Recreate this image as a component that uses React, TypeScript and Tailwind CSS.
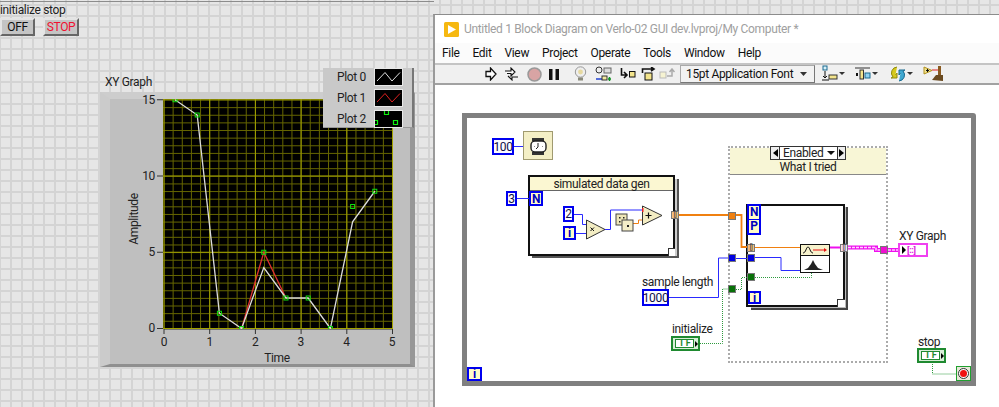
const menuItems = ["File", "Edit", "View", "Project", "Operate", "Tools", "Window", "Help"];

const xTicks = [0, 1, 2, 3, 4, 5];
const yTicks = [0, 5, 10, 15];
const xs = (i: number) => 175 + 22.2 * i;
const sy = (v: number) => 328.5 - 15.25 * v;

const whitePlot = [15, 14, 1, 0, 4, 2, 2, 0, 7, 9];
const markers = [15, 14, 1, 0, 5, 2, 2, 0, 8, 9];

const legend = [
  { name: "Plot 0", color: "#e0e0e0" },
  { name: "Plot 1", color: "#e02020" },
  { name: "Plot 2", color: "" },
];

function PlotArea() {
  const minorX = Array.from({ length: 26 }, (_, i) => 164 + i * 9.14);
  const minorY = Array.from({ length: 31 }, (_, i) => 100 + i * 7.63);
  return (
    <svg width="230" height="230" viewBox="163 99 230 230" className="block bg-black">
      {minorX.map((x) => (
        <line key={x} x1={x} x2={x} y1="99" y2="329" stroke="#666600" strokeWidth="1" />
      ))}
      {minorY.map((y) => (
        <line key={y} x1="163" x2="393" y1={y} y2={y} stroke="#666600" strokeWidth="1" />
      ))}
      {xTicks.map((t) => (
        <line key={t} x1={164 + t * 45.7} x2={164 + t * 45.7} y1="99" y2="329" stroke="#a3a300" strokeWidth="1" />
      ))}
      {yTicks.map((t) => (
        <line key={t} x1="163" x2="393" y1={sy(t)} y2={sy(t)} stroke="#a3a300" strokeWidth="1" />
      ))}
      <polyline points={`${xs(3)},${sy(0)} ${xs(4)},${sy(5)} ${xs(5)},${sy(2)}`} fill="none" stroke="#e03030" strokeWidth="1.3" />
      <polyline points={whitePlot.map((v, i) => `${xs(i)},${sy(v)}`).join(" ")} fill="none" stroke="#dcdcdc" strokeWidth="1.3" />
      {markers.map((v, i) => (
        <rect key={i} x={xs(i) - 2} y={sy(v) - 2} width="4" height="4" fill="none" stroke="#10e010" strokeWidth="1" />
      ))}
    </svg>
  );
}

function XYGraph() {
  return (
    <div className="absolute left-[100px] top-[75px] flex flex-col">
      <div className="h-[17px] pl-[5px] leading-[14px] text-[#222]">XY Graph</div>
      <div className="flex h-[275px] w-[315px] border-t-[7px] border-r-[5px] border-b-[3px] border-l-[10px] border-t-[#cdcdcd] border-r-[#979797] border-b-[#8f8f8f] border-l-[#cbcbcb] bg-[#bfbfbf]">
        <div className="flex h-[240px] w-[36px] items-center justify-center pl-[12px]">
          <span className="-rotate-90 leading-none whitespace-nowrap text-[#222]">Amplitude</span>
        </div>
        <div className="-mt-[7px] -ml-[10px] flex h-[244px] w-[27px] flex-col justify-between pr-[8px] text-right leading-[16px] text-[#222]">
          <span>15</span>
          <span>10</span>
          <span>5</span>
          <span>0</span>
        </div>
        <div className="flex">
          <svg width="10" height="232" viewBox="0 99 10 232" className="-ml-[6px]">
            {yTicks.map((t) => (
              <line key={t} x1="0" x2="6" y1={sy(t)} y2={sy(t)} stroke="#333" />
            ))}
          </svg>
          <div className="-ml-[4px]">
            <PlotArea />
          </div>
        </div>
      </div>
    </div>
  );
}

function FrontPanel() {
  return (
    <>
      <div className="absolute left-0 top-[1px] h-px w-[434px] bg-[#8c8c8c]" />
      <div className="absolute left-0 top-[3px] flex flex-col gap-[1px]">
        <div className="leading-[14px] text-[#222]">initialize stop</div>
        <div className="flex gap-[8px]">
          <div className="flex h-[18px] w-[35px] items-center justify-center border-2 border-t-[#e4e4e4] border-r-[#666] border-b-[#666] border-l-[#e4e4e4] bg-[#c4c4c4] text-[#111]">
            OFF
          </div>
          <div className="flex h-[18px] w-[36px] items-center justify-center border-2 border-t-[#e4e4e4] border-r-[#666] border-b-[#666] border-l-[#e4e4e4] bg-[#c4c4c4] text-[#f01030]">
            STOP
          </div>
        </div>
      </div>

      <XYGraph />

      {/* x scale sits over the bottom of the graph frame */}
      <div className="absolute left-[160px] top-[329px] flex w-[240px] flex-col">
        <svg width="240" height="6" viewBox="0 0 240 6">
          <line x1="4" x2="233" y1="0.5" y2="0.5" stroke="#777" />
          {xTicks.map((t) => (
            <line key={t} x1={4 + t * 45.7} x2={4 + t * 45.7} y1="0" y2="5" stroke="#333" />
          ))}
        </svg>
        <div className="flex w-[236px] justify-between leading-[14px] text-[#222]">
          {xTicks.map((t) => (
            <span key={t} className="w-[8px] text-center">{t}</span>
          ))}
        </div>
        <div className="w-[234px] pt-[2px] text-center leading-[14px] text-[#222]">Time</div>
      </div>

      {/* legend */}
      <div className="absolute left-[323px] top-[68px] flex h-[60px] w-[91px] flex-col gap-[5px] border-r-[2px] border-b-[1px] border-r-[#777] border-b-[#999] bg-[#c9c9c9] pt-[1px] pl-[14px]">
        {legend.map((l) => (
          <div key={l.name} className="flex h-[16px] items-center gap-[10px] text-[#222]">
            <span className="w-[28px] whitespace-nowrap">{l.name}</span>
            <svg width="27" height="16" viewBox="0 0 27 16" className="bg-black outline outline-1 outline-[#e8e8e8]">
              {l.color ? (
                <polyline points="2,12 10,3.5 17,12 25,3.5" fill="none" stroke={l.color} />
              ) : (
                <path d="M9.500 0v3.500h4V0M0 9.500h2.500v4H0M18.500 9.500h4v4h-4z" fill="none" stroke="#10f010" strokeWidth="1.200" />
              )}
            </svg>
          </div>
        ))}
      </div>
    </>
  );
}

function Toolbar() {
  return (
    <div className="flex h-[22px] items-center border-t-2 border-b-2 border-t-[#c4c4c4] border-b-[#a2a2a2] bg-[#f0f0f0] pl-[50px]">
      {/* run */}
      <svg width="12" height="14" viewBox="0 0 12 14">
        <path d="M1 4.500h4.500V1L11 7l-5.500 6V9.500H1z" fill="#fff" stroke="#111" strokeWidth="1.300" />
      </svg>
      {/* run continuously */}
      <svg width="15" height="14" viewBox="0 0 15 14" className="ml-[7px]">
        <path d="M1 4h6V1l4 4-4 4V6.500H3M14 10H8v3L4 9" fill="#fff" stroke="#111" strokeWidth="1.100" />
      </svg>
      {/* abort */}
      <svg width="15" height="15" viewBox="0 0 15 15" className="ml-[8px]">
        <circle cx="7.500" cy="7.500" r="6.500" fill="#d8a4a4" stroke="#999" strokeWidth="1.500" />
      </svg>
      {/* pause */}
      <svg width="10" height="11" viewBox="0 0 10 11" className="ml-[7px]">
        <path d="M0 0h3.500v11H0zM6.500 0H10v11H6.500z" fill="#111" />
      </svg>
      {/* highlight */}
      <svg width="13" height="16" viewBox="0 0 13 16" className="ml-[15px]">
        <circle cx="6.500" cy="6" r="5.200" fill="#eee" stroke="#999" />
        <circle cx="6.500" cy="6" r="2.400" fill="#e6d9a0" />
        <path d="M4 11.500h5v3H4z" fill="#8a8a7a" />
      </svg>
      {/* retain wire values */}
      <svg width="17" height="16" viewBox="0 0 17 16" className="ml-[8px]">
        <circle cx="4" cy="4" r="3" fill="#eee" stroke="#333" />
        <rect x="9" y="2" width="7" height="5" fill="#ddd" stroke="#666" />
        <path d="M1 13h6" stroke="#2040d0" strokeWidth="1.500" />
        <rect x="7" y="10" width="5" height="4" fill="#f3e9a0" stroke="#333" />
        <path d="M13 13h3M14.500 11v4" stroke="#109020" strokeWidth="1.500" />
      </svg>
      {/* step into */}
      <svg width="16" height="12" viewBox="0 0 16 12" className="ml-[8px]">
        <path d="M1.500 0v7h5M4 4l3 3-3 3" fill="none" stroke="#111" strokeWidth="1.600" />
        <rect x="9.500" y="3.500" width="5.500" height="5.500" fill="#f3e48c" stroke="#111" />
      </svg>
      {/* step over */}
      <svg width="16" height="14" viewBox="0 0 16 14" className="ml-[5px]">
        <path d="M1.500 6V2h11M10 0l3 2-3 2" fill="none" stroke="#111" strokeWidth="1.600" />
        <rect x="4" y="6" width="7" height="7" fill="#f3e48c" stroke="#111" />
      </svg>
      {/* step out */}
      <svg width="16" height="12" viewBox="0 0 16 12" className="ml-[2px]">
        <rect x="1" y="4" width="6" height="6" fill="#f6f3d2" stroke="#bbb" />
        <path d="M8 8h5V2M10.500 4L13 1l2.500 3" fill="none" stroke="#aaa" strokeWidth="1.500" />
      </svg>
      <div className="ml-[5px] flex h-[18px] w-[135px] items-center justify-between border border-[#a9a9a9] border-r-[#777] border-b-[#777] bg-[#f2f2f2] pr-[7px] pl-[5px] whitespace-nowrap text-[#111]">
        <span>15pt Application Font</span>
        <svg width="7" height="4" viewBox="0 0 7 4">
          <path d="M0 0h7L3.500 4z" fill="#333" />
        </svg>
      </div>
      {/* align */}
      <svg width="23" height="18" viewBox="0 0 23 18" className="ml-[7px]">
        <rect x="1" y="1" width="4" height="4" fill="#d8f0f8" stroke="#1a6a90" />
        <path d="M3 6v7M1 11l2 2 2-2M0 15h7" stroke="#111" fill="none" />
        <rect x="7" y="10" width="8" height="4" fill="#f3e48c" stroke="#333" />
        <path d="M17 7h6l-3 3z" fill="#333" />
      </svg>
      {/* distribute */}
      <svg width="23" height="18" viewBox="0 0 23 18" className="ml-[10px]">
        <path d="M0 3h15" stroke="#333" />
        <rect x="1" y="8" width="2" height="3" fill="#111" />
        <rect x="5" y="5" width="3.500" height="9" fill="#f3e48c" stroke="#333" />
        <rect x="10" y="8" width="5" height="5" fill="#8fd0f0" stroke="#1a6a90" />
        <path d="M17 7h6l-3 3z" fill="#333" />
      </svg>
      {/* reorder */}
      <svg width="23" height="18" viewBox="0 0 23 18" className="ml-[12px]">
        <path d="M7 2A6 6 0 0 0 3 12l-2 1h6V8l-1.500 2" fill="#d6c91c" stroke="#8f8a10" />
        <path d="M9 16a6 6 0 0 0 4-10l2-1H9v5l1.500-2" fill="#40a8d0" stroke="#1a6a90" />
        <path d="M17 7h6l-3 3z" fill="#333" />
      </svg>
      {/* clean up */}
      <svg width="21" height="18" viewBox="0 0 21 18" className="ml-[10px]">
        <path d="M1 2l8 3.500-8 3.500z" fill="#f3e48c" stroke="#b09020" />
        <path d="M3 5.500h3M4.500 4v3" stroke="#111" />
        <path d="M9 5h7" stroke="#e02020" />
        <path d="M15 1h3v9h-3z" fill="#8a5a20" />
        <path d="M9 15l4-5h7v6z" fill="#6a4a20" />
      </svg>
    </div>
  );
}

function Wires() {
  return (
    <svg width="564" height="320" viewBox="435 87 564 320" className="absolute left-0 top-0">
      <g fill="none" stroke="#2a2aff" strokeWidth="1">
        <path d="M514 148.500h10M517 200.500h13M574 216.500h8.500v10h4M576 235.500h10M605 231.500h5.500v-19.500h31.500" />
        <path d="M669 299.500h49.500v-39.500h10M736 260.500h11M755 259.500h26v13h19" />
      </g>
      <path d="M633 225.500h5.500v-3.500h4" fill="none" stroke="#f08010" />
      <path d="M679 217h49M736 217h5.500v32h5.500" fill="none" stroke="#f08010" strokeWidth="1.800" />
      <path d="M754 249.500h46" fill="none" stroke="#f08010" />
      <g fill="none" stroke="#2d9a3e" strokeDasharray="1 1">
        <path d="M700 345.500h22.500v-54.500h5.500M736 291.500h5.500v-12h5.500M755 279.500h56.500v-5" />
        <path d="M932.500 364v12h23.500" />
      </g>
      <path d="M829 249.500h11" stroke="#ee10ee" strokeWidth="2" />
      <path d="M848 249.500h28v2.500h4M888 252h10" fill="none" stroke="#ee10ee" strokeWidth="4" />
      <path d="M848 249.500h28v2.500h4M888 252h10" fill="none" stroke="#ffd0ff" strokeWidth="1.500" strokeDasharray="3 1" />

      {/* wait node */}
      <rect x="523.500" y="133.500" width="29" height="28" fill="#f4efc6" stroke="#a09a70" />
      <rect x="532" y="140" width="12" height="3" fill="#333" />
      <rect x="532" y="154" width="12" height="3" fill="#333" />
      <rect x="531" y="143" width="15" height="11" rx="4" fill="#fff" stroke="#222" strokeWidth="1.400" />
      <path d="M538 145v4l-2 2M534 148.500h.5M543 148.500h-.5" fill="none" stroke="#222" />

      {/* multiply, add */}
      <polygon points="586.500,222 586.500,241 605,231.500" fill="#f3edc3" stroke="#333" />
      <path d="M590.500 229.500l3.500 3.500M594 229.500l-3.500 3.500" stroke="#111" />
      <polygon points="642.500,208 642.500,227 662,217.500" fill="#f3edc3" stroke="#333" />
      <path d="M645.500 217.500h6M648.500 214.500v6" stroke="#111" strokeWidth="1.200" />
      <rect x="642" y="210" width="1.500" height="4" fill="#f02020" />

      {/* dice */}
      <rect x="616" y="216" width="11" height="11" fill="#eee6b8" stroke="#444" />
      <rect x="622" y="222" width="11" height="11" fill="#f4edc8" stroke="#444" />
      <path d="M619 219h1.500v1.500H619zM623 219h1.500v1.500H623zM619 223h1.500v1.500H619z" fill="#222" />
      <rect x="627" y="227" width="2" height="2" fill="#222" />

      {/* gaussian node */}
      <rect x="800.500" y="246.500" width="29" height="28" fill="#fff" stroke="#111" />
      <rect x="801" y="247" width="28" height="10" fill="#f7f2cc" />
      <path d="M800.500 257.500h29" stroke="#111" />
      <path d="M803 255c3 0 3-6 5-6s2 6 5 6" fill="none" stroke="#111" />
      <path d="M813 252h12" stroke="#e81010" />
      <path d="M824 250l3 2-3 2z" fill="#e81010" />
      <path d="M804 272l4-2 3-4 2-4 2 4 3 4 5 2z" fill="#222" />
    </svg>
  );
}

function BoolTerminal() {
  return (
    <div className="flex h-[15px] w-[29px] items-center border-2 border-[#1f8a30] bg-[#d8eed8] pl-[2px]">
      <span className="flex h-[9px] w-[20px] items-center justify-center border border-[#1f8a30] bg-white text-[9px] leading-[9px] font-bold text-[#1f8a30]">T F</span>
      <span className="ml-[1px] h-0 w-0 border-y-[3px] border-l-[3px] border-y-transparent border-l-black" />
    </div>
  );
}

function BlockDiagram() {
  return (
    <div className="relative flex-1 overflow-hidden bg-white">
      {/* outer while loop */}
      <div className="absolute left-[27px] top-[28px] h-[273px] w-[514px] rounded-tr-[3px] border-[5px] border-[#808080] bg-white" />

      {/* first for loop */}
      <div className="absolute left-[97px] top-[94px] h-[79px] w-[147px] border-r-2 border-b-2 border-[#555] bg-[#ccc]" />
      <div className="absolute left-[93px] top-[90px] h-[81px] w-[147px] border-2 border-[#111] bg-white">
        <div className="flex h-[14px] items-center justify-center border-b border-[#666] bg-[#fbf7d2] text-[#222]">
          simulated data gen
        </div>
      </div>
      <div className="absolute left-[233px] top-[163px] h-[8px] w-[7px] border-t border-l border-[#333] bg-white" />

      {/* case structure */}
      <div className="absolute left-[293px] top-[61px] h-[217px] w-[160px] border-2 border-dotted border-[#ababab]">
        <div className="flex h-[27px] items-end justify-center border-b border-[#888] bg-[#f8f6d6] leading-[13px] text-[#222]">
          What I tried
        </div>
      </div>
      <div className="absolute left-[335px] top-[61px] flex h-[14px] w-[76px] items-stretch border border-[#333] bg-white leading-[12px] text-[#222]">
        <span className="flex w-[8px] items-center justify-center bg-[#eee]">
          <span className="h-0 w-0 border-y-[4px] border-r-[5px] border-y-transparent border-r-black" />
        </span>
        <span className="flex flex-1 items-center justify-between border-x border-[#333] pr-[2px] pl-[3px]">
          Enabled
          <span className="h-0 w-0 border-x-[4px] border-t-[4px] border-x-transparent border-t-[#111]" />
        </span>
        <span className="flex w-[7px] items-center justify-center bg-[#eee]">
          <span className="h-0 w-0 border-y-[4px] border-l-[5px] border-y-transparent border-l-black" />
        </span>
      </div>

      {/* inner for loop */}
      <div className="absolute left-[316px] top-[122px] h-[103px] w-[97px] border-r-2 border-b-2 border-[#444] bg-[#bbb]" />
      <div className="absolute left-[311px] top-[119px] h-[103px] w-[99px] border-2 border-[#111] bg-white" />
      <div className="absolute left-[402px] top-[214px] h-[8px] w-[8px] border-t border-l border-[#333] bg-white" />

      <Wires />

      {/* constants */}
      <div className="absolute left-[57px] top-[53px] flex h-[17px] w-[22px] items-center justify-center border-2 border-[#0000f0] bg-[#fbfbff] text-[#10104a]">100</div>
      <div className="absolute left-[71px] top-[106px] flex h-[15px] w-[11px] items-center justify-center border-2 border-[#0000f0] bg-[#fbfbff] text-[#10104a]">3</div>
      <div className="absolute left-[128px] top-[121px] flex h-[16px] w-[11px] items-center justify-center border-2 border-[#0000f0] bg-[#fbfbff] text-[#10104a]">2</div>

      {/* terminals */}
      <div className="absolute left-[94px] top-[106px] flex h-[15px] w-[14px] items-center justify-center border-2 border-[#0000f0] bg-[#fffcc8] font-bold text-[#0000c0]">N</div>
      <div className="absolute left-[128px] top-[141px] flex h-[14px] w-[13px] items-center justify-center border-2 border-[#0000f0] bg-[#fffcc8] font-bold text-[#0000c0]">i</div>
      <div className="absolute left-[312px] top-[119px] flex w-[14px] flex-col border-2 border-[#0000f0] bg-[#fffcc8] text-center leading-[13px] font-bold text-[#0000c0]">
        <span className="border-b border-[#0000f0]">N</span>
        <span>P</span>
      </div>
      <div className="absolute left-[313px] top-[206px] flex h-[13px] w-[13px] items-center justify-center border-2 border-[#0000f0] bg-[#fffcc8] font-bold text-[#0000c0]">i</div>
      <div className="absolute left-[32px] top-[282px] flex h-[14px] w-[15px] items-center justify-center border-2 border-[#0000f0] bg-[#fffcc8] font-bold text-[#0000c0]">i</div>

      {/* tunnels */}
      <div className="absolute left-[236px] top-[126px] flex h-[8px] w-[8px] items-center justify-center border border-[#777] bg-[#f4c080] text-[7px] leading-[7px] text-[#333]">[]</div>
      <div className="absolute left-[312px] top-[159px] flex h-[8px] w-[8px] items-center justify-center border border-[#777] bg-[#f4c080] text-[7px] leading-[7px] text-[#333]">[]</div>
      <div className="absolute left-[405px] top-[159px] flex h-[8px] w-[8px] items-center justify-center border border-[#777] bg-[#f6ddf0] text-[7px] leading-[7px] text-[#333]">[]</div>
      <div className="absolute left-[293px] top-[127px] h-[8px] w-[8px] border border-[#777] bg-[#f08010]" />
      <div className="absolute left-[293px] top-[169px] h-[8px] w-[8px] border border-[#777] bg-[#0000e0]" />
      <div className="absolute left-[312px] top-[169px] h-[8px] w-[8px] border border-[#777] bg-[#0000e0]" />
      <div className="absolute left-[293px] top-[200px] h-[8px] w-[8px] border border-[#777] bg-[#087008]" />
      <div className="absolute left-[312px] top-[188px] h-[8px] w-[8px] border border-[#777] bg-[#087008]" />
      <div className="absolute left-[445px] top-[161px] h-[8px] w-[8px] border border-[#777] bg-[#ee10d0]" />

      {/* labelled nodes */}
      <div className="absolute left-[207px] top-[190px] flex flex-col leading-[14px] text-[#222]">
        <span>sample length</span>
        <div className="flex h-[17px] w-[27px] items-center justify-center border-2 border-[#0000f0] bg-[#fbfbff] text-[#10104a]">1000</div>
      </div>
      <div className="absolute left-[236px] top-[238px] flex flex-col leading-[13px] text-[#222]">
        <span className="pl-[1px]">initialize</span>
        <BoolTerminal />
      </div>
      <div className="absolute left-[482px] top-[251px] flex flex-col leading-[12px] text-[#222]">
        <span className="pl-[1px]">stop</span>
        <BoolTerminal />
      </div>
      <div className="absolute left-[463px] top-[144px] flex flex-col leading-[14px] text-[#222]">
        <span className="pl-[1px]">XY Graph</span>
        <div className="flex h-[14px] w-[30px] items-center gap-[1px] border-2 border-[#f040f0] bg-white pl-[2px] text-[9px] leading-[9px] font-bold text-[#e020e0]">
          <span className="h-0 w-0 border-y-[4px] border-l-[4px] border-y-transparent border-l-black" />
          [::]
        </div>
      </div>

      <div className="absolute left-[521px] top-[281px] flex h-[15px] w-[15px] items-center justify-center border border-[#20a030] bg-[#e8e8d8]">
        <span className="flex h-[11px] w-[11px] items-center justify-center rounded-full border border-[#333] bg-white">
          <span className="h-[7px] w-[7px] rounded-full bg-[#f01010]" />
        </span>
      </div>
    </div>
  );
}

export default function App() {
  return (
    <div className="relative h-[407px] w-[999px] overflow-hidden bg-[#e6e6e6] bg-[linear-gradient(#d4d4d4_2px,transparent_2px),linear-gradient(90deg,#d4d4d4_2px,transparent_2px)] bg-[size:11px_11px] bg-[position:10px_4px] font-['Roboto',sans-serif] text-[12px] tracking-[-0.028em]">
      <FrontPanel />

      {/* block diagram window */}
      <div className="absolute left-[433px] top-[14px] flex h-[393px] w-[566px] flex-col border-t border-l-2 border-t-[#8c8c8c] border-l-[#9a9a9a] bg-white">
        <div className="flex h-[28px] items-center gap-[5px] pl-[9px]">
          <svg width="15" height="15" viewBox="0 0 15 15">
            <rect width="15" height="15" rx="1.500" fill="#f6b810" />
            <path d="M4 3l8 4.500-8 4.500z" fill="#fff" />
          </svg>
          <span className="whitespace-nowrap text-[#a0a0a0]">
            Untitled 1 Block Diagram on Verlo-02 GUI dev.lvproj/My Computer *
          </span>
        </div>
        <div className="flex h-[20px] items-center gap-[13px] bg-[#fbfbfb] pl-[7px] text-[#111]">
          {menuItems.map((m) => (
            <span key={m}>{m}</span>
          ))}
        </div>
        <Toolbar />
        <BlockDiagram />
      </div>
    </div>
  );
}
